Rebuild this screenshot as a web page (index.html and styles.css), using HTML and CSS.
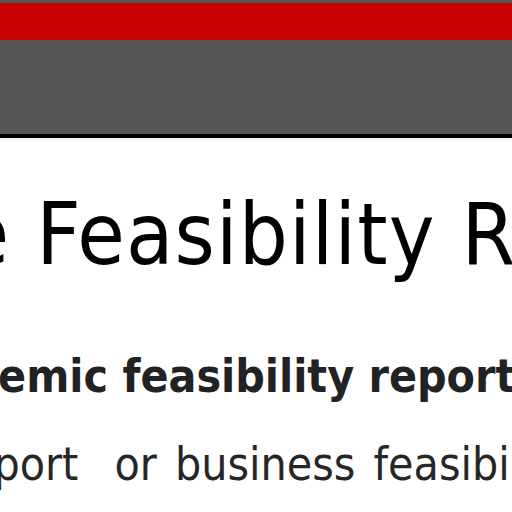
FILE: index.html
```html
<!DOCTYPE html>
<html>
<head>
<meta charset="utf-8">
<link rel="stylesheet" href="styles.css">
</head>
<body>
<header class="site-header">
  <div class="top-strip"></div>
  <div class="brand-bar"></div>
  <nav class="nav-bar"></nav>
  <div class="nav-rule"></div>
</header>
<main class="content">
  <h1 class="title">Sample Feasibility Report</h1>
  <p class="lead">Academic feasibility report</p>
  <p class="body-text">report&nbsp; or business feasibility study</p>
</main>
</body>
</html>
```
FILE: styles.css
```css
html, body {
  margin: 0;
  padding: 0;
  background: #ffffff;
  overflow: hidden;
  width: 512px;
  height: 512px;
}

.site-header {
  display: flex;
  flex-direction: column;
}

.top-strip {
  height: 3px;
  background: #555555;
}

.brand-bar {
  height: 37px;
  background: #c80000;
}

.nav-bar {
  height: 94px;
  background: #555555;
}

.nav-rule {
  height: 4px;
  background: #000000;
  border-bottom: 2px solid #f4f4f4;
}

.content {
  font-family: "DejaVu Sans Condensed", "DejaVu Sans", sans-serif;
  font-stretch: condensed;
  white-space: nowrap;
}

.title {
  margin: 51px 0 0 -287px;
  font-size: 86px;
  line-height: 86px;
  font-weight: normal;
  letter-spacing: 1.2px;
  color: #000000;
}

.lead {
  margin: 76px 0 0 -116px;
  font-size: 46px;
  line-height: 46px;
  font-weight: bold;
  color: #222222;
}

.body-text {
  margin: 42px 0 0 -48px;
  font-size: 46px;
  line-height: 46px;
  word-spacing: 5px;
  color: #262626;
}
```
